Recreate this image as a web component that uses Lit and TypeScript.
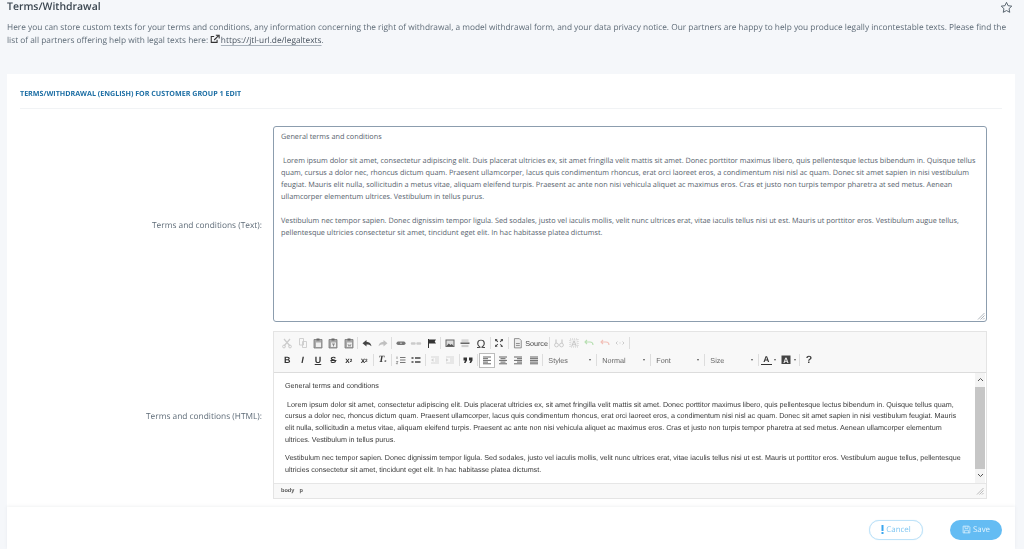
import { LitElement, html, css, svg } from "lit";
import { customElement } from "lit/decorators.js";

const LINES_A = [
  "\u00a0Lorem ipsum dolor sit amet, consectetur adipiscing elit. Duis placerat ultricies ex, sit amet fringilla velit mattis sit amet. Donec porttitor maximus libero, quis pellentesque lectus bibendum in. Quisque tellus",
  "quam, cursus a dolor nec, rhoncus dictum quam. Praesent ullamcorper, lacus quis condimentum rhoncus, erat orci laoreet eros, a condimentum nisi nisl ac quam. Donec sit amet sapien in nisi vestibulum",
  "feugiat. Mauris elit nulla, sollicitudin a metus vitae, aliquam eleifend turpis. Praesent ac ante non nisi vehicula aliquet ac maximus eros. Cras et justo non turpis tempor pharetra at sed metus. Aenean",
  "ullamcorper elementum ultrices. Vestibulum in tellus purus.",
];
const LINES_B = [
  "Vestibulum nec tempor sapien. Donec dignissim tempor ligula. Sed sodales, justo vel iaculis mollis, velit nunc ultrices erat, vitae iaculis tellus nisi ut est. Mauris ut porttitor eros. Vestibulum augue tellus,",
  "pellentesque ultricies consectetur sit amet, tincidunt eget elit. In hac habitasse platea dictumst.",
];
const HTML_A = [
  "\u00a0Lorem ipsum dolor sit amet, consectetur adipiscing elit. Duis placerat ultricies ex, sit amet fringilla velit mattis sit amet. Donec porttitor maximus libero, quis pellentesque lectus bibendum in. Quisque tellus quam,",
  "cursus a dolor nec, rhoncus dictum quam. Praesent ullamcorper, lacus quis condimentum rhoncus, erat orci laoreet eros, a condimentum nisi nisl ac quam. Donec sit amet sapien in nisi vestibulum feugiat. Mauris",
  "elit nulla, sollicitudin a metus vitae, aliquam eleifend turpis. Praesent ac ante non nisi vehicula aliquet ac maximus eros. Cras et justo non turpis tempor pharetra at sed metus. Aenean ullamcorper elementum",
  "ultrices. Vestibulum in tellus purus.",
];
const HTML_B = [
  "Vestibulum nec tempor sapien. Donec dignissim tempor ligula. Sed sodales, justo vel iaculis mollis, velit nunc ultrices erat, vitae iaculis tellus nisi ut est. Mauris ut porttitor eros. Vestibulum augue tellus, pellentesque",
  "ultricies consectetur sit amet, tincidunt eget elit. In hac habitasse platea dictumst.",
];

const L = "#cbcbcb";
const icons: Record<string, unknown> = {
  cut: svg`<path d="M3 2l6 7M9 2L3 9" stroke="${L}" stroke-width="1.2" fill="none"/><circle cx="3" cy="9.5" r="1.4" fill="none" stroke="${L}"/><circle cx="9" cy="9.5" r="1.4" fill="none" stroke="${L}"/>`,
  copy: svg`<path d="M2.5 1.5h4v6.5h-4zM5.5 4.5h4v6h-4z" fill="#f8f8f8" stroke="${L}" stroke-width=".9"/>`,
  paste: svg`<path d="M2 2.5h8v8.5h-8z" fill="#aaa" stroke="#777" stroke-width=".8"/><path d="M4.5 1.5h3v2h-3z" fill="#666"/><path d="M4 5.5h5v4.5h-5z" fill="#eee"/>`,
  pastet: svg`<path d="M2 2.5h8v8.5h-8z" fill="#aaa" stroke="#777" stroke-width=".8"/><path d="M4.5 1.5h3v2h-3z" fill="#666"/><path d="M4 5.5h5v4.5h-5z" fill="#eee"/><path d="M5 7h3M6.5 7v2.4" stroke="#777" stroke-width=".8"/>`,
  pastew: svg`<path d="M2 2.5h8v8.5h-8z" fill="#aaa" stroke="#777" stroke-width=".8"/><path d="M4.5 1.5h3v2h-3z" fill="#666"/><path d="M4 5.5h5v4.5h-5z" fill="#eee"/><path d="M5 7l.8 2.4.7-1.6.7 1.6.8-2.4" stroke="#777" stroke-width=".6" fill="none"/>`,
  undo: svg`<path d="M5.5 3L1.5 6.2l4 3.3V7.5c2.2 0 3.6.4 5 1.7-.4-2.6-2-4.1-5-4.4z" fill="#444"/>`,
  redo: svg`<path d="M6.5 3l4 3.2-4 3.3V7.5c-2.2 0-3.6.4-5 1.7.4-2.6 2-4.1 5-4.4z" fill="#c0c0c0"/>`,
  link: svg`<rect x="1.5" y="4.5" width="9" height="3.5" rx="1.7" fill="#777"/><path d="M5 6.2h2" stroke="#ccc"/>`,
  unlink: svg`<path d="M2 6.5h2.500M7.500 6.500h2.500" stroke="${L}" stroke-width="2.5" stroke-linecap="round"/>`,
  anchor: svg`<path d="M2.5 2v9" stroke="#333"/><path d="M3 2.5h7l-1.3 2 1.3 2H3z" fill="#333"/>`,
  image: svg`<rect x="1.5" y="2.5" width="9" height="7.5" fill="#666"/><rect x="2.5" y="3.5" width="7" height="5.5" fill="#ddd"/><path d="M2.5 9l2.2-2.6 1.8 1.7 1.3-1.2 1.7 2.1z" fill="#555"/>`,
  hr: svg`<path d="M1.5 6.2h9" stroke="#555" stroke-width="1.4"/><path d="M2.5 3h7M2.5 4.2h7M2.5 8.4h7M2.5 9.6h7" stroke="#bbb" stroke-width=".8"/>`,
  omega: svg`<text x="6" y="10.5" text-anchor="middle" font-size="12" font-family="Liberation Sans" fill="#444">Ω</text>`,
  max: svg`<path d="M2 2l2.6.2-.8.8 1.4 1.4-.8.8L3 3.8l-.8.8zM10 2l-.2 2.6-.8-.8-1.4 1.4-.8-.8L8.2 3l-.8-.8zM2 10l.2-2.6.8.8 1.4-1.4.8.8L3.8 8.600l.8.8zM10 10l-2.6-.2.8-.8-1.4-1.4.8-.8L8 8.200l.8-.8z" fill="#444"/>`,
  source: svg`<path d="M2.5 1.5h5l2 2v7.5h-7z" fill="#eee" stroke="#777" stroke-width=".8"/><path d="M4 6.5h4M4 8.5h4" stroke="#777" stroke-width=".8"/>`,
  find: svg`<circle cx="3.5" cy="8" r="1.9" fill="none" stroke="${L}" stroke-width="1"/><circle cx="8.5" cy="8" r="1.9" fill="none" stroke="${L}" stroke-width="1"/><path d="M3 2.5v4M9 2.5v4" stroke="${L}" stroke-width="1.3"/>`,
  replace: svg`<rect x="2" y="2" width="8" height="8" fill="#f0f0f0" stroke="${L}" stroke-dasharray="1 1"/><text x="6" y="9" text-anchor="middle" font-size="7.5" font-family="Liberation Sans" fill="#bbb">A</text>`,
  la: svg`<path d="M4 3L2 5 4 7M2.5 5h4.5c2 0 3 1 3 3" fill="none" stroke="#b7dfb2" stroke-width="1.1"/>`,
  ra: svg`<path d="M4 3L2 5 4 7M2.5 5h4.5c2 0 3 1 3 3" fill="none" stroke="#f2c0b8" stroke-width="1.1"/>`,
  code: svg`<path d="M3.5 4.5L2 6l1.5 1.5M8.5 4.5L10 6 8.5 7.5" fill="none" stroke="${L}" stroke-width="1"/><path d="M5.5 6h1" stroke="${L}"/>`,
  ol: svg`<path d="M5 3.5h5.5M5 6h5.5M5 8.5h5.5" stroke="#777" stroke-width="1"/><path d="M2 2.5v2.5M1.2 7.5h1.8L1.2 9.7h1.8" stroke="#777" stroke-width=".7" fill="none"/>`,
  ul: svg`<path d="M5 4h5.5M5 8h5.5" stroke="#444" stroke-width="1.3"/><path d="M1.5 4h2M1.5 8h2" stroke="#444" stroke-width="1.5"/>`,
  outd: svg`<path d="M2 3h8M6 5h4M6 7h4M2 9h8" stroke="#d2d2d2" stroke-width=".9"/><path d="M4.5 4.2v3.6L2 6z" fill="#d2d2d2"/>`,
  ind: svg`<path d="M2 3h8M6 5h4M6 7h4M2 9h8" stroke="#d2d2d2" stroke-width=".9"/><path d="M2 4.2v3.6L4.5 6z" fill="#d2d2d2"/>`,
  quote: svg`<path d="M1.5 3.5h3.5v3L3.5 9H2l1-2.5H1.5zM7 3.5h3.5v3L9 9H7.5l1-2.5H7z" fill="#333"/>`,
  left: svg`<path d="M2 3h8M2 4.7h5M2 6.4h8M2 8.1h5M2 9.8h8" stroke="#555" stroke-width=".9"/>`,
  center: svg`<path d="M2 3h8M3.5 4.7h5M2 6.4h8M3.5 8.1h5M2 9.8h8" stroke="#555" stroke-width=".9"/>`,
  right: svg`<path d="M2 3h8M5 4.7h5M2 6.4h8M5 8.1h5M2 9.8h8" stroke="#555" stroke-width=".9"/>`,
  just: svg`<path d="M2 3h8M2 4.7h8M2 6.4h8M2 8.1h8M2 9.8h8" stroke="#555" stroke-width=".9"/>`,
  bg: svg`<rect x="1.5" y="1.5" width="9" height="8.5" fill="#444"/><text x="6" y="8.8" text-anchor="middle" font-size="7.5" font-weight="700" font-family="Liberation Sans" fill="#eee">A</text>`,
};

@customElement("app-root")
export class AppRoot extends LitElement {
  static styles = css`
    :host {
      display: flex;
      flex-direction: column;
      width: 1024px;
      height: 549px;
      overflow: hidden;
      background: #f5f7fa;
      font-family: "Open Sans", sans-serif;
      color: #5a6672;
      text-rendering: geometricPrecision;
    }
    .main { flex: 1; min-height: 0; overflow: hidden; padding: 0 9px 0 7px; opacity: 0.999; }
    .head { display: flex; justify-content: space-between; align-items: center; height: 14px; }
    .title { font-size: 10.45px; font-weight: 600; color: #3b4650; line-height: 14px; }
    .star { display: block; margin-right: 2px; }
    .desc { margin: 6.5px 0 0; font-size: 8.32px; line-height: 13.6px; color: #5f6c78; width: 1008px; white-space: nowrap; }
    .desc a { color: #4a5560; text-decoration: underline; text-decoration-color: #a9b2bb; text-underline-offset: 1.5px; }
    .ext { vertical-align: -1px; margin-right: 0.5px; }
    .card { margin-top: 26px; background: #fff; padding: 14px 13px 0; height: 500px; box-sizing: border-box; }
    .card-title { font-size: 7.14px; font-weight: 700; color: #1c6ea4; line-height: 12px; padding-bottom: 8px; border-bottom: 1px solid #f1f3f5; text-transform: uppercase; }
    .row { display: flex; align-items: center; }
    .row-a { margin-top: 17px; }
    .row-b { margin-top: 9px; }
    .lbl { width: 242px; text-align: right; font-size: 8.35px; color: #5f6c78; flex: none; box-sizing: border-box; padding-top: 3px; }
    .ta { position: relative; width: 714px; height: 196px; box-sizing: border-box; border: 1px solid #8c9dae; border-radius: 3px; padding: 4px 7px; font-size: 7.29px; line-height: 12.05px; color: #56616c; white-space: nowrap; background: #fff; margin-left: 11px; }
    .ta p { margin: 0; }
    .gap { height: 12.05px; }
    .grip { position: absolute; right: 1px; bottom: 1px; display: block; }
    .ed { width: 714px; height: 168px; box-sizing: border-box; border: 1px solid #e4e4e4; margin-left: 11px; display: flex; flex-direction: column; background: #f8f8f8; }
    .tb { height: 41px; flex: none; box-sizing: border-box; border-bottom: 1px solid #dcdcdc; padding: 3px 0 0 5.5px; }
    .tr { display: flex; align-items: center; height: 17px; }
    .btn { width: 15.4px; height: 15px; display: flex; align-items: center; justify-content: center; flex: none; box-sizing: border-box; }
    .btn svg { display: block; }
    .on { border: 1px solid #bcbcbc; background: #fff; width: 16px; }
    .sep { width: 3px; flex: none; display: flex; justify-content: center; }
    .sep i { display: block; width: 1px; height: 12px; background: #dddddd; }
    .src { width: 38px; justify-content: flex-start; padding-left: 2px; gap: 1.5px; font: 7.2px "Liberation Sans", sans-serif; color: #444; }
    .combo { width: 51px; flex: none; display: flex; justify-content: space-between; align-items: center; padding: 0 4px; box-sizing: border-box; font: 7.2px "Liberation Sans", sans-serif; color: #666; }
    .caret { width: 0; height: 0; border-left: 1.5px solid transparent; border-right: 1.5px solid transparent; border-top: 2px solid #555; flex: none; }
    .clr { width: 19px; flex: none; display: flex; align-items: center; gap: 2px; padding-left: 1px; box-sizing: border-box; height: 15px; }
    .a-lbl { font: 700 8.5px/9px "Liberation Sans", sans-serif; color: #333; border-bottom: 1.5px solid #333; padding: 0 2px; }
    .help { font: 700 10.5px "Liberation Sans", sans-serif; color: #444; }
    .bt { font: 700 9px "Liberation Sans", sans-serif; color: #333; }
    .it { font-style: italic; }
    .un { text-decoration: underline; }
    .st { text-decoration: line-through; }
    .sm { font-size: 8px; }
    .sm sub, .sm sup { font-size: 4.5px; }
    .tx { font-family: "Liberation Serif", serif; font-style: italic; font-size: 9.5px; }
    .tx sub { font-size: 4.5px; }
    .body { flex: 1; min-height: 0; display: flex; background: #fff; }
    .doc { flex: 1; min-width: 0; padding: 7px 0 0 11px; font: 7.2px/11.7px "Liberation Sans", sans-serif; color: #3a3a3a; white-space: nowrap; overflow: hidden; }
    .doc p { margin: 0 0 7.4px; }
    .doc p:last-child { font-size: 7.16px; }
    .sb { width: 10px; flex: none; display: flex; flex-direction: column; align-items: center; background: #f4f4f4; margin-right: 1px; }
    .sb .ar { height: 14px; display: flex; align-items: center; justify-content: center; flex: none; }
    .thumb { flex: 1; align-self: stretch; background: #c6c6c6; }
    .status { height: 15px; flex: none; box-sizing: border-box; border-top: 1px solid #e6e6e6; display: flex; align-items: center; justify-content: space-between; padding: 0 2px 0 7px; font: 700 5.6px "Liberation Sans", sans-serif; color: #555; }
    .crumbs { display: flex; gap: 5px; }
    .foot { flex: none; height: 42px; margin: 0 9px 0 7px; background: #fff; box-shadow: 0 -1px 3px rgba(120,130,140,.1); display: flex; align-items: center; justify-content: flex-end; padding: 3px 13px 0 0; box-sizing: border-box; gap: 27px; position: relative; opacity: 0.999; }
    .b { height: 20px; border-radius: 10px; display: flex; align-items: center; justify-content: center; gap: 2px; font-size: 7.9px; box-sizing: border-box; }
    .cancel { width: 54px; border: 1.5px solid #bfe3f9; color: #7fc6f2; background: #fff; box-shadow: 0 0 1px #bfe3f9; }
    .save { width: 52px; background: #64bcf3; color: #e4f4fe; }
  `;

  private bt(name: string, extra = "") {
    return html`<span class="btn ${extra}"><svg width="12" height="12" viewBox="0 0 12 12">${icons[name]}</svg></span>`;
  }
  private sep() {
    return html`<span class="sep"><i></i></span>`;
  }
  private row1() {
    return html`<div class="tr">
      ${["cut", "copy", "paste", "pastet", "pastew"].map((n) => this.bt(n))}${this.sep()}
      ${["undo", "redo"].map((n) => this.bt(n))}${this.sep()}
      ${["link", "unlink", "anchor"].map((n) => this.bt(n))}${this.sep()}
      ${["image", "hr", "omega"].map((n) => this.bt(n))}${this.sep()}
      ${this.bt("max")}${this.sep()}
      <span class="btn src"><svg width="12" height="12" viewBox="0 0 12 12">${icons.source}</svg>Source</span>${this.sep()}
      ${["find", "replace", "la", "ra", "code"].map((n) => this.bt(n))}${this.sep()}
    </div>`;
  }
  private row2() {
    return html`<div class="tr">
      <span class="btn bt">B</span><span class="btn bt it">I</span><span class="btn bt un">U</span><span class="btn bt st">S</span>
      <span class="btn bt sm">x<sub>2</sub></span>
      <span class="btn bt sm">x<sup>2</sup></span>
      ${this.sep()}
      <span class="btn bt tx">T<sub>x</sub></span>
      ${this.sep()}
      ${["ol", "ul"].map((n) => this.bt(n))}${this.sep()}
      ${["outd", "ind"].map((n) => this.bt(n))}${this.sep()}
      ${this.bt("quote")}${this.sep()}
      ${this.bt("left", "on")}${["center", "right", "just"].map((n) => this.bt(n))}${this.sep()}
      ${["Styles", "Normal", "Font", "Size"].map(
        (n) => html`<span class="combo">${n}<i class="caret"></i></span>${this.sep()}`
      )}
      <span class="clr"><span class="a-lbl">A</span><i class="caret"></i></span>
      <span class="clr"><svg width="12" height="12" viewBox="0 0 12 12">${icons.bg}</svg><i class="caret"></i></span>
      ${this.sep()}
      <span class="btn help">?</span>
    </div>`;
  }

  render() {
    const grip = html`<svg class="grip" width="8" height="8" viewBox="0 0 8 8"><path d="M7.5 1L1 7.5M7.5 3.5L3.5 7.5M7.5 6L6 7.5" stroke="#9aa2aa" stroke-width=".8"/></svg>`;
    return html`
      <div class="main">
        <div class="head">
          <span class="title">Terms/Withdrawal</span>
          <svg class="star" width="13" height="13" viewBox="0 0 24 24"><path d="M12 2.5l2.9 6.2 6.8.8-5 4.7 1.3 6.7-6-3.3-6 3.3 1.3-6.7-5-4.7 6.8-.8z" fill="none" stroke="#4f5b66" stroke-width="1.7" stroke-linejoin="round"/></svg>
        </div>
        <p class="desc">Here you can store custom texts for your terms and conditions, any information concerning the right of withdrawal, a model withdrawal form, and your data privacy notice. Our partners are happy to help you produce legally incontestable texts. Please find the<br />list of all partners offering help with legal texts here: <svg class="ext" width="10" height="10" viewBox="0 0 12 12"><path d="M8.5 7v3H1.5V3h3.5" fill="none" stroke="#333" stroke-width="1.3"/><path d="M5 7.2L10 2.2M7 1.5h4v4" fill="none" stroke="#333" stroke-width="1.3"/></svg><a>https://jtl-url.de/legaltexts</a>.</p>
        <div class="card">
          <div class="card-title">Terms/Withdrawal (English) for customer group 1 edit</div>
          <div class="row row-a">
            <div class="lbl">Terms and conditions (Text):</div>
            <div class="ta">
              <p>General terms and conditions</p>
              <div class="gap"></div>
              ${LINES_A.map((l) => html`<p>${l}</p>`)}
              <div class="gap"></div>
              ${LINES_B.map((l) => html`<p>${l}</p>`)}
              ${grip}
            </div>
          </div>
          <div class="row row-b">
            <div class="lbl">Terms and conditions (HTML):</div>
            <div class="ed">
              <div class="tb">${this.row1()}${this.row2()}</div>
              <div class="body">
                <div class="doc">
                  <p>General terms and conditions</p>
                  <p>${HTML_A.map((l) => html`${l}<br />`)}</p>
                  <p>${HTML_B.map((l) => html`${l}<br />`)}</p>
                </div>
                <div class="sb">
                  <span class="ar"><svg width="7" height="5" viewBox="0 0 7 5"><path d="M1 4l2.5-2.5L6 4" fill="none" stroke="#555" stroke-width="1"/></svg></span>
                  <div class="thumb"></div>
                  <span class="ar"><svg width="7" height="5" viewBox="0 0 7 5"><path d="M1 1l2.5 2.5L6 1" fill="none" stroke="#555" stroke-width="1"/></svg></span>
                </div>
              </div>
              <div class="status"><span class="crumbs"><span>body</span><span>p</span></span><svg width="8" height="8" viewBox="0 0 8 8"><path d="M7.5 1L1 7.5M7.5 3.5L3.5 7.5M7.5 6L6 7.5" stroke="#aaa" stroke-width=".8"/></svg></div>
            </div>
          </div>
        </div>
      </div>
      <div class="foot">
        <span class="b cancel"><svg width="3" height="9" viewBox="0 0 3 9"><path d="M.5 0h2v6h-2zM.5 7h2v2h-2z" fill="#3aa6ee"/></svg>Cancel</span>
        <span class="b save"><svg width="9" height="9" viewBox="0 0 12 12"><path d="M1.5 1.5h7.5l1.5 1.5v7.5h-9z" fill="none" stroke="#e4f4fe" stroke-width="1"/><path d="M4 1.5v3h4v-3M3.5 10.5v-3.5h5v3.500" fill="none" stroke="#e4f4fe" stroke-width=".9"/></svg>Save</span>
      </div>
    `;
  }
}
